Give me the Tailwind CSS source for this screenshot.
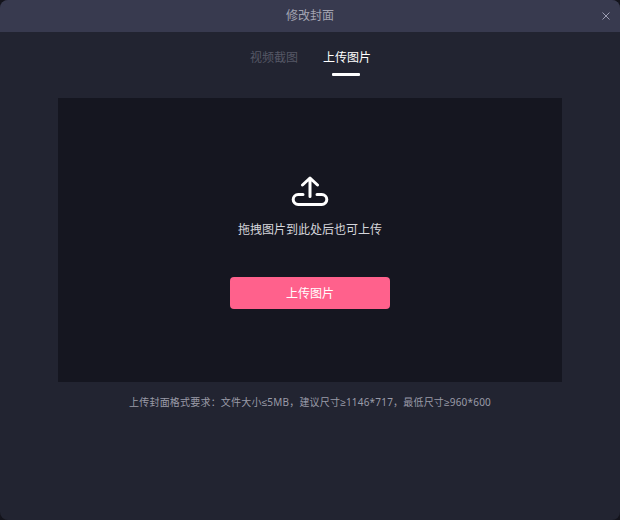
<!DOCTYPE html>
<html lang="zh-CN">
<head>
  <meta charset="UTF-8" />
  <title>修改封面</title>
  <script src="https://cdn.jsdelivr.net/npm/@tailwindcss/browser@4"></script>
</head>
<body class="bg-[#14141c] font-['Noto_Sans','Noto_Sans_CJK_SC',sans-serif]">
  <div class="w-[620px] h-[520px] bg-[#222431] rounded-lg overflow-hidden flex flex-col">
    <!-- title bar -->
    <div class="relative h-8 bg-[#383a4f] flex items-center justify-center">
      <span class="text-xs text-[#a3a4b2]">修改封面</span>
      <svg class="absolute right-[10px] top-[12px] w-2 h-2" viewBox="0 0 8 8" fill="none" stroke="#9c9db2" stroke-width="1">
        <path d="M0.500 0.500 L7.500 7.500 M7.500 0.500 L0.500 7.500" />
      </svg>
    </div>

    <!-- tabs -->
    <div class="h-[66px] flex justify-center gap-[25px] pt-4 pl-[1px]">
      <div class="text-xs leading-5 text-[#565866]">视频截图</div>
      <div class="flex flex-col items-center">
        <div class="text-xs leading-5 text-white">上传图片</div>
        <div class="w-7 h-[3px] mt-[5px] mr-[2px] bg-white rounded-[1px]"></div>
      </div>
    </div>

    <!-- upload area -->
    <div class="mx-[58px] w-[504px] h-[284px] bg-[#151620] flex flex-col items-center pt-[78px]">
      <svg class="w-[38px] h-8" viewBox="0 0 38 32" fill="none" stroke="white" stroke-width="3" stroke-linecap="round" stroke-linejoin="round">
        <path d="M19 20.500 V2.500 M11.500 9 L19 2 L26.500 9" />
        <path d="M12 18.500 H7.200 A5 5 0 0 0 7.200 28.500 H30.800 A5 5 0 0 0 30.800 18.500 H26" />
      </svg>
      <div class="mt-[12px] text-xs leading-5 text-[#d5d6dc]">拖拽图片到此处后也可上传</div>
      <button class="mt-[37px] w-40 h-8 pt-px rounded bg-[#ff618c] text-xs text-white">上传图片</button>
    </div>

    <!-- hint -->
    <div class="mt-3 text-center text-[10px] leading-4 tracking-[0.2px] text-[#9a9ba8] font-['Noto_Sans','Liberation_Sans','Noto_Sans_CJK_SC',sans-serif]">上传封面格式要求：文件大小≤5MB，建议尺寸≥1146*717，最低尺寸≥960*600</div>
  </div>
</body>
</html>
